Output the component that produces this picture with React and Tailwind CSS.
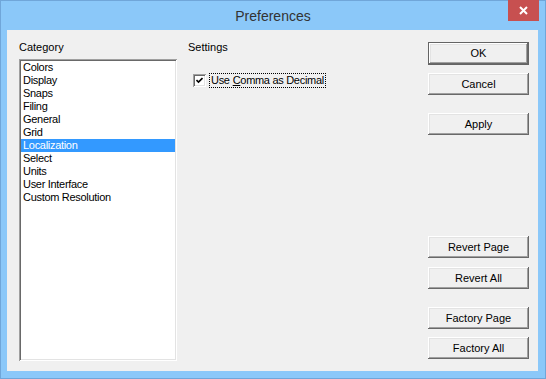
const categories = [
  "Colors",
  "Display",
  "Snaps",
  "Filing",
  "General",
  "Grid",
  "Localization",
  "Select",
  "Units",
  "User Interface",
  "Custom Resolution",
];

const raised =
  "shadow-[inset_-1px_-1px_#696969,inset_1px_1px_#ffffff,inset_-2px_-2px_#a0a0a0,inset_2px_2px_#e3e3e3]";
const sunken =
  "shadow-[inset_1px_1px_#a0a0a0,inset_-1px_-1px_#ffffff,inset_2px_2px_#696969,inset_-2px_-2px_#e3e3e3]";

function Button({ label, def, className = "" }) {
  return (
    <div
      className={`w-[101px] flex items-center justify-center bg-[#f0f0f0] text-[11px] text-black ${
        def ? "h-[23px] border border-[#646464]" : `h-[22px] ${raised}`
      } ${className}`}
    >
      {def ? (
        <div className={`w-full h-full flex items-center justify-center ${raised}`}>{label}</div>
      ) : (
        label
      )}
    </div>
  );
}

export default function App() {
  const selected = "Localization";

  return (
    <div className="w-[546px] h-[379px] bg-[#8bc8f9] border border-[#70a6d9] flex flex-col font-['Liberation_Sans',Arial,sans-serif]">
      {/* title bar */}
      <div className="relative h-[29px] flex items-center justify-center shrink-0">
        <span className="text-[14px] text-[#333333] leading-none">Preferences</span>
        <div className="absolute right-[6px] top-[-1px] w-[31px] h-[21px] bg-[#c75050] flex items-center justify-center">
          <svg width="9" height="9" viewBox="0 0 9 9">
            <path d="M1 1 L8 8 M8 1 L1 8" stroke="#ffffff" strokeWidth="2" />
          </svg>
        </div>
      </div>

      {/* client */}
      <div className="flex-1 ml-[6px] mr-[7px] mb-[7px] bg-[#f0f0f0] flex">
        {/* category column */}
        <div className="ml-[12px] flex flex-col">
          <div className="mt-[11px] h-[13px] leading-[13px] text-[11px] text-black">Category</div>
          <div className={`mt-[5px] w-[158px] h-[302px] bg-white p-[2px] ${sunken}`}>
            {categories.map((c) => (
              <div
                key={c}
                className={`h-[13px] leading-[13px] pl-[2px] text-[11px] tracking-[-0.3px] ${
                  c === selected ? "bg-[#3399ff] text-white" : "text-black"
                }`}
              >
                {c}
              </div>
            ))}
          </div>
        </div>

        {/* settings */}
        <div className="ml-[11px] flex-1 flex flex-col">
          <div className="mt-[11px] h-[13px] leading-[13px] text-[11px] text-black">Settings</div>
          <div className="mt-[19px] ml-[5px] h-[15px] flex items-center">
            <div className={`w-[13px] h-[13px] bg-white flex items-center justify-center ${sunken}`}>
              <svg width="7" height="7" viewBox="0 0 7 7">
                <path d="M0.5 3 L2.5 5 L6.5 1" stroke="#000000" strokeWidth="1.6" fill="none" />
              </svg>
            </div>
            <div className="ml-[3px] h-[15px] px-[1px] flex items-center border border-dotted border-black text-[11px] tracking-[-0.3px] text-black leading-none">
              Use <span className="underline ml-[3px]">C</span>omma as Decimal
            </div>
          </div>
        </div>

        {/* buttons */}
        <div className="mr-[9px] flex flex-col">
          <Button label="OK" def className="mt-[12px]" />
          <Button label="Cancel" className="mt-[8px]" />
          <Button label="Apply" className="mt-[18px]" />
          <Button label="Revert Page" className="mt-[101px]" />
          <Button label="Revert All" className="mt-[9px]" />
          <Button label="Factory Page" className="mt-[18px]" />
          <Button label="Factory All" className="mt-[8px]" />
        </div>
      </div>
    </div>
  );
}
